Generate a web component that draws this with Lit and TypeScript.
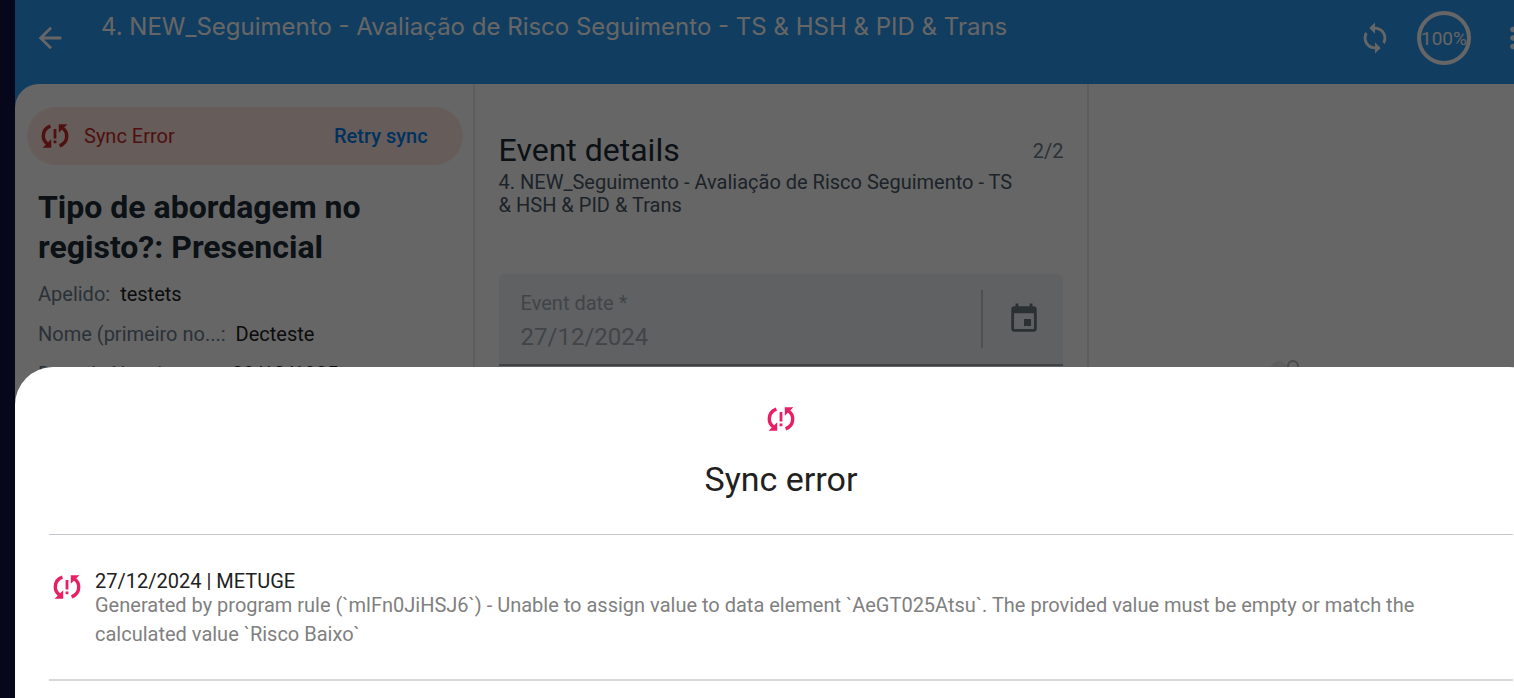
import { LitElement, html, css } from "lit";
import { customElement, property } from "lit/decorators.js";

@customElement("sync-problem-icon")
class SyncProblemIcon extends LitElement {
  static styles = css`
    :host { display: block; width: 32px; height: 32px; flex: none; }
    svg { display: block; width: 100%; height: 100%; }
  `;
  render() {
    return html`<svg viewBox="0 0 32 32" aria-hidden="true">
      <g fill="none" stroke="currentColor" stroke-width="3.4">
        <path d="M11.4 6.2C7 7.800 4.300 11.600 4.300 16c0 3 1.300 5.800 4 7.800"/>
        <path d="M20.600 25.800C25 24.200 27.700 20.400 27.700 16c0-3-1.300-5.800-4-7.800"/>
      </g>
      <path fill="currentColor" d="M3.600 27.800h8.600v-8.600zM28.400 4.200h-8.600v8.600zM14.600 9h2.800v9.500h-2.800zM14.600 20.600h2.800v2.700h-2.800z"/>
    </svg>`;
  }
}

@customElement("error-sheet")
class ErrorSheet extends LitElement {
  static styles = css`
    :host {
      display: flex; flex-direction: column; box-sizing: border-box;
      min-height: 100%; padding: 36px 34px; background: #fff;
      border-radius: 38px 38px 0 0; color: #212121;
    }
    .head {
      display: flex; flex-direction: column; align-items: center;
      gap: 20px; padding-bottom: 31px; border-bottom: 1px solid #cac4cc;
    }
    .pink { color: #e91e63; }
    h2 { margin: 0; font-size: 34px; line-height: 48px; font-weight: 400; }
    .item {
      display: flex; gap: 12px; padding: 36px 0 30px 2px;
      border-bottom: 2px solid #d8d8d8;
    }
    .body { padding-right: 80px; }
    .title { margin: 0; font-size: 20px; line-height: 20px; font-weight: 400; }
    .text { margin: 0; font-size: 20px; line-height: 29px; color: #808080; }
  `;
  render() {
    return html`
      <div class="head">
        <sync-problem-icon class="pink"></sync-problem-icon>
        <h2>Sync error</h2>
      </div>
      <article class="item">
        <sync-problem-icon class="pink"></sync-problem-icon>
        <div class="body">
          <h3 class="title">27/12/2024 | METUGE</h3>
          <p class="text">Generated by program rule (\`mlFn0JiHSJ6\`) - Unable to assign value to data element \`AeGT025Atsu\`. The provided value must be empty or match the calculated value \`Risco Baixo\`</p>
        </div>
      </article>`;
  }
}

@customElement("app-root")
class AppRoot extends LitElement {
  @property({ type: String }) program = "4. NEW_Seguimento - Avaliação de Risco Seguimento - TS & HSH & PID & Trans";
  details = [
    ["Apelido:", "testets"],
    ["Nome (primeiro no...:", "Decteste"],
    ["Data de Nascimen...:", "09/10/1985"],
  ];
  static styles = css`
    :host {
      display: flex; height: 100vh; overflow: hidden; background: #07071c;
      padding-left: 15px; box-sizing: border-box;
      font-family: Roboto, "Liberation Sans", sans-serif;
    }
    * { box-sizing: border-box; }
    button { border: 0; padding: 0; background: none; color: inherit; font: inherit; display: block; flex: none; }
    svg { display: block; }
    .device { position: relative; flex: none; width: calc(100% + 33px); background: #2c98f0; }
    .bar { display: flex; align-items: center; height: 84px; padding: 0 17px 8px 18px; color: #fff; }
    .back { margin-right: 34px; }
    .name { flex: 1; margin: 0; align-self: flex-start; padding-top: 11px; font: 400 24px/32px Inter, sans-serif; white-space: nowrap; }
    .sync { margin-right: 25px; }
    .ring {
      display: grid; place-items: center; width: 54px; height: 54px; margin-right: 25px;
      border: 4px solid #fff; border-radius: 50%; font-size: 19px; white-space: nowrap;
    }
    .panes { display: grid; grid-template-columns: 3fr 4fr 3fr; height: calc(100% - 84px); background: #fff; border-radius: 24px 0 0 0; }
    .left { padding: 23px 10px 23px 12px; border-right: 2px solid #e8e8e8; }
    .alert {
      display: flex; align-items: center; height: 58px; padding: 0 35px 0 12px;
      border-radius: 29px; background: #ffe5e0; color: #c62828; font-size: 20px;
    }
    .alert .label { flex: 1; padding-left: 13px; }
    .alert .retry { color: #007deb; font-weight: 500; }
    .summary { padding: 22px 11px; }
    h1 { margin: 0 0 7px; font-size: 32px; line-height: 40px; font-weight: 700; color: #1d2b36; }
    dl { margin: 0; font-size: 20px; line-height: 40px; }
    .row { display: flex; gap: 10px; }
    dt { color: #6c7c8c; }
    dd { margin: 0; color: #212121; }
    .middle { padding: 47px 24px; }
    .heading { display: flex; align-items: center; justify-content: space-between; color: #6c7c8c; font-size: 20px; }
    h2 { margin: 0 0 2px; font-size: 32px; line-height: 38px; font-weight: 400; color: #1d2b36; }
    .sub { margin: 0; padding-right: 46px; font-size: 20px; line-height: 23px; color: #4a5768; }
    .field {
      display: flex; align-items: center; height: 92px; margin-top: 57px; padding: 0 22px;
      border-radius: 5px 5px 0 0; background: #eff3f5; border-bottom: 2px solid #a0a8ae;
    }
    .entry { flex: 1; min-width: 0; display: flex; flex-direction: column; gap: 4px; padding-top: 3px; color: #a4acb3; }
    .entry label { font-size: 20px; line-height: 28px; }
    .entry input { border: 0; padding: 0; width: 100%; background: none; color: inherit; font: 24px/32px Roboto, sans-serif; }
    .cal { padding: 12px 0 12px 24px; border-left: 2px solid #c0c6ca; color: #6b7a80; }
    .right { display: flex; justify-content: center; padding: 272px 50px 0 0; border-left: 2px solid #e8e8e8; }
    .scrim { position: absolute; inset: 0; padding-top: 367px; background: rgba(0, 0, 0, 0.6); }
  `;
  render() {
    return html`
      <div class="device">
        <header class="bar">
          <button class="back" aria-label="Back"><svg width="34" height="34" viewBox="0 0 24 24" fill="currentColor"><path d="M20 11H7.83l5.59-5.59L12 4l-8 8 8 8 1.41-1.41L7.83 13H20v-2z"/></svg></button>
          <p class="name">${this.program}</p>
          <button class="sync" aria-label="Sync"><svg width="34" height="34" viewBox="0 0 24 24" fill="currentColor"><path d="M12 4V1L8 5l4 4V6c3.31 0 6 2.69 6 6 0 1.01-.25 1.97-.7 2.8l1.46 1.46C19.54 15.03 20 13.57 20 12c0-4.42-3.58-8-8-8zm0 14c-3.31 0-6-2.69-6-6 0-1.01.25-1.97.7-2.8L5.24 7.74C4.46 8.97 4 10.43 4 12c0 4.42 3.58 8 8 8v3l4-4-4-4v3z"/></svg></button>
          <div class="ring">100%</div>
          <button aria-label="More options"><svg width="34" height="34" viewBox="0 0 24 24" fill="currentColor"><path d="M12 8c1.1 0 2-.9 2-2s-.9-2-2-2-2 .9-2 2 .9 2 2 2zm0 2c-1.1 0-2 .9-2 2s.9 2 2 2 2-.9 2-2-.9-2-2-2zm0 6c-1.1 0-2 .9-2 2s.9 2 2 2 2-.9 2-2-.9-2-2-2z"/></svg></button>
        </header>
        <main class="panes">
          <section class="left">
            <div class="alert">
              <sync-problem-icon></sync-problem-icon>
              <span class="label">Sync Error</span>
              <button class="retry">Retry sync</button>
            </div>
            <div class="summary">
              <h1>Tipo de abordagem no registo?: Presencial</h1>
              <dl>${this.details.map(([k, v]) => html`<div class="row"><dt>${k}</dt><dd>${v}</dd></div>`)}</dl>
            </div>
          </section>
          <section class="middle">
            <div class="heading"><h2>Event details</h2><span>2/2</span></div>
            <p class="sub">${this.program}</p>
            <div class="field">
              <div class="entry">
                <label for="date">Event date *</label>
                <input id="date" value="27/12/2024" disabled />
              </div>
              <button class="cal" aria-label="Pick a date"><svg width="34" height="34" viewBox="0 0 24 24" fill="currentColor"><path d="M17 12h-5v5h5v-5zM16 1v2H8V1H6v2H5c-1.11 0-1.99.9-1.99 2L3 19c0 1.1.89 2 2 2h14c1.1 0 2-.9 2-2V5c0-1.1-.9-2-2-2h-1V1h-2zm3 18H5V8h14v11z"/></svg></button>
            </div>
          </section>
          <section class="right">
            <svg width="80" height="60" viewBox="0 0 80 60" aria-hidden="true"><circle cx="26" cy="14" r="9" fill="#ececec"/><circle cx="40" cy="10" r="5" fill="none" stroke="#b8b8b8" stroke-width="2"/></svg>
          </section>
        </main>
        <div class="scrim"><error-sheet role="dialog" aria-label="Sync error"></error-sheet></div>
      </div>`;
  }
}
